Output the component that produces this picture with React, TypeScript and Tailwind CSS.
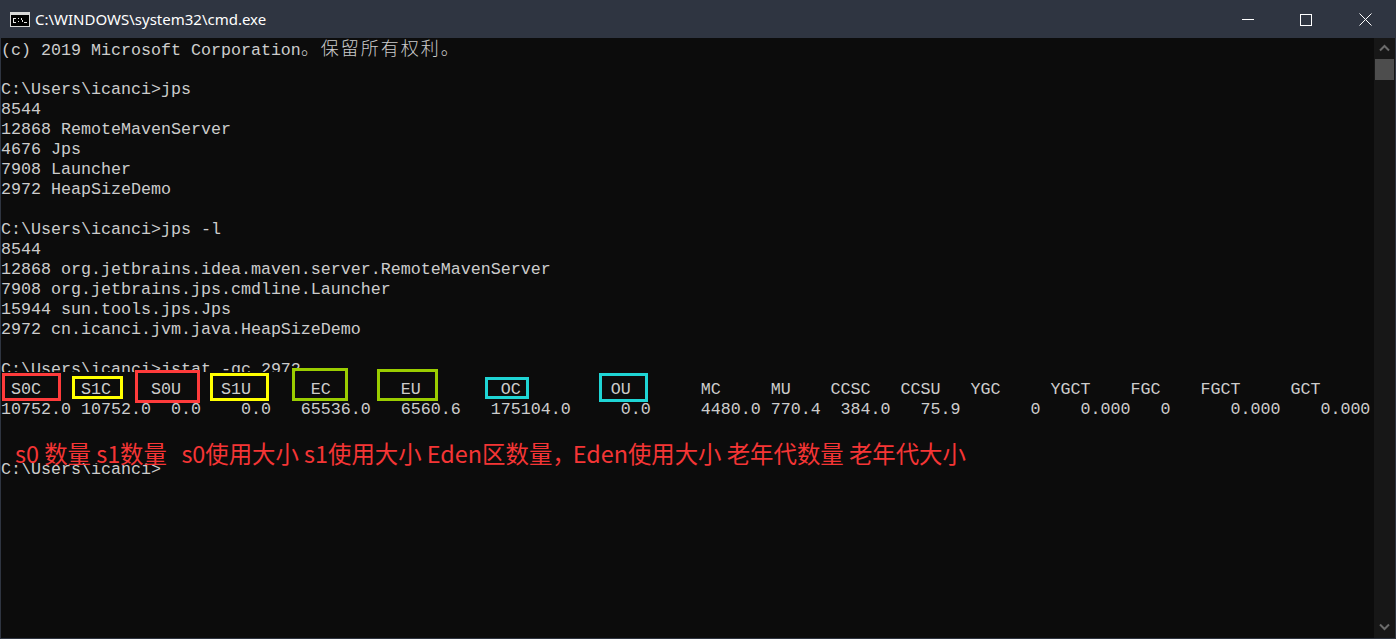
const cjk = "text-[18px] leading-none tracking-[2px] [font-family:'Noto_Sans_CJK_SC',sans-serif] font-light"

// Lignes de la console, une rangée = 20px
const topRows = [
  "",
  "C:\\Users\\icanci>jps",
  "8544",
  "12868 RemoteMavenServer",
  "4676 Jps",
  "7908 Launcher",
  "2972 HeapSizeDemo",
  "",
  "C:\\Users\\icanci>jps -l",
  "8544",
  "12868 org.jetbrains.idea.maven.server.RemoteMavenServer",
  "7908 org.jetbrains.jps.cmdline.Launcher",
  "15944 sun.tools.jps.Jps",
  "2972 cn.icanci.jvm.java.HeapSizeDemo",
  "",
  "C:\\Users\\icanci>jstat -gc 2972",
]

const header = " S0C    S1C    S0U    S1U      EC       EU        OC         OU       MC     MU    CCSC   CCSU   YGC     YGCT    FGC    FGCT     GCT"
const values = "10752.0 10752.0  0.0    0.0   65536.0   6560.6   175104.0     0.0     4480.0 770.4  384.0   75.9       0    0.000   0      0.000    0.000"

// Cadres de couleur posés sur la capture
const boxes = [
  "left-[2px] top-[373px] w-[59px] h-[28px] border-[#ff3b3b]",
  "left-[72px] top-[376px] w-[51px] h-[23px] border-[#ffff00]",
  "left-[135px] top-[370px] w-[65px] h-[33px] border-[#ff3b3b]",
  "left-[210px] top-[373px] w-[59px] h-[28px] border-[#ffff00]",
  "left-[292px] top-[368px] w-[56px] h-[33px] border-[#9acd00]",
  "left-[377px] top-[369px] w-[61px] h-[32px] border-[#9acd00]",
  "left-[485px] top-[377px] w-[44px] h-[22px] border-[#1fd5d5]",
  "left-[599px] top-[373px] w-[49px] h-[29px] border-[#1fd5d5]",
]

function Row({ text }: { text: string }) {
  return <div className="h-5 whitespace-pre">{text}</div>
}

export default function App() {
  return (
    <div className="relative flex flex-col w-full h-screen overflow-hidden bg-[#0c0c0c] border border-[#2f3541]">

      {/* ── Barre de titre ── */}
      <div className="flex items-center h-[37px] shrink-0 bg-[#2f3541] text-white">
        <svg className="ml-[9px] shrink-0" width="20" height="15" viewBox="0 0 20 15" shapeRendering="crispEdges" aria-hidden="true">
          <rect x="0" y="0" width="20" height="15" fill="#d9d9d9" />
          <rect x="1" y="3" width="18" height="11" fill="#000000" />
          <path d="M3 6h3M3 7v3M3 10h3M8 6h1M8 9h1M11 6l2 4M14 10h3" stroke="#e6e6e6" fill="none" />
        </svg>
        <span className="ml-[5px] text-[15px] [font-family:'Noto_Sans',sans-serif]">C:\WINDOWS\system32\cmd.exe</span>

        <div className="flex ml-auto">
          <div className="flex items-center justify-center w-[59px] h-[37px]">
            <svg width="12" height="12" viewBox="0 0 12 12" shapeRendering="crispEdges" aria-hidden="true">
              <path d="M0 5.5h12" stroke="white" />
            </svg>
          </div>
          <div className="flex items-center justify-center w-[59px] h-[37px] pr-[2px]">
            <svg width="12" height="12" viewBox="0 0 12 12" shapeRendering="crispEdges" aria-hidden="true">
              <rect x="0.5" y="0.5" width="11" height="11" fill="none" stroke="white" />
            </svg>
          </div>
          <div className="flex items-center justify-center w-[59px] h-[37px]">
            <svg width="13" height="13" viewBox="0 0 13 13" aria-hidden="true">
              <path d="M0.5 0.5l12 12M12.5 0.5l-12 12" stroke="white" fill="none" />
            </svg>
          </div>
        </div>
      </div>

      {/* ── Console + ascenseur ── */}
      <div className="flex flex-1 min-h-0">
        <div className="flex-1 min-w-0 overflow-hidden pt-[2px] text-[16.66px] leading-5 text-[#cccccc] [font-family:'Liberation_Mono',monospace]">
          {/* Le texte CJK pousse la ligne de base : on remonte cette rangée de 2px */}
          <div className="-mt-[2px] h-[22px] whitespace-pre">
            (c) 2019 Microsoft Corporation<span className={cjk}>。保留所有权利。</span>
          </div>
          {topRows.map((row, i) => (
            <Row key={i} text={row} />
          ))}
          {/* La bande d'en-tête recouvre le bas de la ligne jstat */}
          <div className="relative -mt-[8px] h-[28px] pt-[8px] whitespace-pre bg-[#0c0c0c]">{header}</div>
          <Row text={values} />
          <Row text="" />
          <Row text="" />
          <Row text="C:\Users\icanci>" />
        </div>

        <div className="flex flex-col items-center w-[21px] shrink-0 bg-[#171717]">
          <svg className="mt-[6px] shrink-0" width="11" height="8" viewBox="0 0 11 8" aria-hidden="true">
            <path d="M1 6.5l4.5-4.5 4.5 4.5" fill="none" stroke="#6b6b6b" strokeWidth="2" />
          </svg>
          <div className="mt-[7px] w-[19px] h-[21px] shrink-0 bg-[#4d4d4d]" />
          <svg className="mt-auto mb-[7px] shrink-0" width="11" height="8" viewBox="0 0 11 8" aria-hidden="true">
            <path d="M1 1.5l4.5 4.5 4.5-4.5" fill="none" stroke="#6b6b6b" strokeWidth="2" />
          </svg>
        </div>
      </div>

      {/* ── Annotations ajoutées sur la capture ── */}
      {boxes.map(box => (
        <div key={box} className={`absolute -translate-x-px -translate-y-px border-[3px] ${box}`} />
      ))}
      <div className="absolute left-0 top-[441px] w-[1000px] h-[21px] bg-[#0c0c0c]" />
      <div className="absolute left-[14px] top-[438px] h-7 leading-7 whitespace-pre text-[23.4px] text-[#f53535] [font-family:'Noto_Sans_CJK_SC',sans-serif]">
        s0 数量 s1数量  <span className="ml-[4px]">s0使用大小 s1使用大小 Eden区数量，</span><span className="-ml-[3px]">Eden使用大小 老年代数量 老年代大小</span>
      </div>
    </div>
  )
}
